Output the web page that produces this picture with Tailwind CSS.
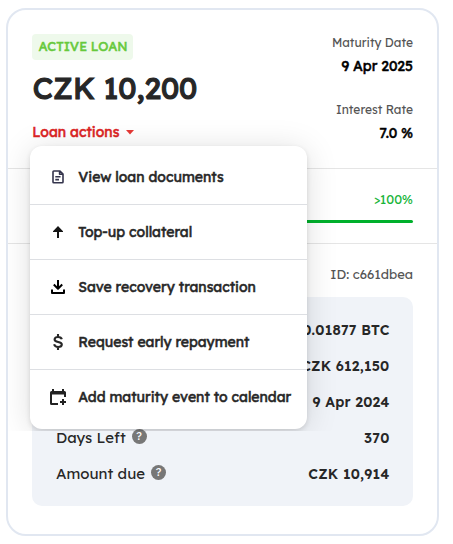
<!DOCTYPE html>
<html lang="en">
<head>
<meta charset="utf-8">
<title>Loan</title>
<script src="https://cdn.jsdelivr.net/npm/@tailwindcss/browser@4"></script>
</head>
<body class="relative h-[544px] w-[453px] overflow-hidden bg-white font-['Lexend','Inter',sans-serif] text-[#272727]">
<main class="ml-[6px] mt-[8px] flex h-[528px] w-[433px] flex-col rounded-[20px] border-2 border-[#e1e7f1] bg-white whitespace-nowrap">
  <header class="flex h-[158px] justify-between px-6 pt-6">
    <div class="flex flex-col items-start">
      <div class="flex h-[26px] w-[101px] items-center rounded bg-[#eef9eb] pl-[6.500px] text-[13px] font-normal text-[#67c93c] [-webkit-text-stroke:0.5px_currentColor]"><span>ACTIVE LOAN</span></div>
      <h1 class="mt-[8px] h-[40px] pl-[0.750px] text-[30px] leading-[40px] font-normal [-webkit-text-stroke:1.2px_currentColor]"><span>CZK 10,200</span></h1>
      <button class="mt-[14px] flex h-[20px] items-center gap-[6.500px] pl-[0.250px] text-[14px] font-normal text-[#dc2323] [-webkit-text-stroke:0.5px_currentColor]"><span>Loan actions</span><svg class="h-[5px] w-[8px]" viewBox="0 0 8 5" fill="#e53935"><path d="M0 0h8L4 4.600z"/></svg></button>
    </div>
    <dl class="flex flex-col items-end">
      <dt class="h-[18px] text-[12px] leading-[18px] text-[#555]"><span>Maturity Date</span></dt>
      <dd class="mt-[4px] h-[20px] text-[14px] leading-[20px] font-normal text-black [-webkit-text-stroke:0.5px_currentColor]"><span>9 Apr 2025</span></dd>
      <dt class="mt-[25px] h-[18px] text-[12px] leading-[18px] text-[#555]"><span>Interest Rate</span></dt>
      <dd class="mt-[4px] h-[20px] text-[14px] leading-[20px] font-normal text-black [-webkit-text-stroke:0.5px_currentColor]"><span>7.0 %</span></dd>
    </dl>
  </header>
  <section class="flex h-[75px] flex-col items-end border-t border-[#e5e5e5] px-6 pt-[20px]">
    <div class="h-[20px] text-[13px] leading-[20px] text-[#19b53b]"><span>&gt;100%</span></div>
    <div class="mt-[11px] h-[3px] w-full rounded-full bg-[#00b02c]"></div>
  </section>
  <section class="flex flex-col border-t border-[#e5e5e5] px-6 pt-[20px]">
    <div class="h-[20px] self-end text-[13px] leading-[20px] text-[#555]"><span>ID: c661dbea</span></div>
    <div class="mt-[13px] h-[209px] rounded-[10px] bg-[#f0f3f8] px-6 pt-[15px] text-[15px]">
      <div class="flex h-[36px] items-center justify-end"><span class="text-[14px] tracking-[0.220px] -mr-[0.500px] font-semibold">0.01877 BTC</span></div>
      <div class="flex h-[36px] items-center justify-end"><span class="text-[14px] tracking-[0.220px] -mr-[0.500px] font-semibold">CZK 612,150</span></div>
      <div class="flex h-[36px] items-center justify-end"><span class="text-[14px] tracking-[0.220px] -mr-[0.500px] font-semibold">9 Apr 2024</span></div>
      <div class="flex h-[36px] items-center justify-between"><span class="flex items-center gap-[6px]"><span>Days Left</span><i class="relative -top-[1.500px] flex size-[15px] items-center justify-center rounded-full bg-[#777] text-[11px] font-normal text-white not-italic">?</i></span><span class="text-[14px] tracking-[0.220px] -mr-[0.500px] font-semibold">370</span></div>
      <div class="flex h-[36px] items-center justify-between"><span class="flex items-center gap-[6px]"><span>Amount due</span><i class="relative -top-[1.500px] flex size-[15px] items-center justify-center rounded-full bg-[#777] text-[11px] font-normal text-white not-italic">?</i></span><span class="text-[14px] tracking-[0.220px] -mr-[0.500px] font-semibold">CZK 10,914</span></div>
    </div>
  </section>
</main>
<div class="absolute top-0 left-[8px] h-[431px] w-[429px] overflow-hidden">
  <nav class="mt-[146px] ml-[22px] flex h-[283px] w-[277px] flex-col rounded-[12px] bg-white py-[4px] text-[14px] font-normal whitespace-nowrap shadow-[0_3px_32px_rgba(0,0,0,0.13),0_2px_5px_rgba(0,0,0,0.12)] [-webkit-text-stroke:0.5px_currentColor]">
    <a class="flex h-[55px] items-center gap-[12.250px] border-b border-[#dddfe3] pl-[20px]"><svg class="size-4" viewBox="0 0 16 16" fill="none" stroke="#34344c" stroke-width="1.600"><path stroke-linejoin="round" d="M3 2.800q0-.8.800-.8H10l3 3v8q0 .800-.800.800H3.800Q3 13.800 3 13zM9.600 2.300v2.900h3M5.300 7.800h5.200M5.300 10.600h3.700"/></svg><span>View loan documents</span></a>
    <a class="flex h-[55px] items-center gap-[12.250px] border-b border-[#dddfe3] pl-[20px]"><svg class="size-4" viewBox="0 0 16 16" fill="#151515"><path d="M8 2 13 7.300v.7H9v6H7V8H3v-.7z"/></svg><span>Top-up collateral</span></a>
    <a class="flex h-[55px] items-center gap-[12.250px] border-b border-[#dddfe3] pl-[20px]"><svg class="size-4" viewBox="0 0 16 16" fill="none" stroke="#000" stroke-width="2"><path d="M8 1v8.500M3.800 5.500 8 9.700l4.200-4.200M2 10.500V14h12v-3.500" stroke-linejoin="round"/></svg><span>Save recovery transaction</span></a>
    <a class="flex h-[55px] items-center gap-[12.250px] border-b border-[#dddfe3] pl-[20px]"><svg class="size-4" viewBox="0 0 16 16" fill="none" stroke="#272727" stroke-width="2.100"><path d="M8 0v3M8 13v3M11.800 5.300C11.400 3.700 10 3 8.100 3 6 3 4.600 4 4.600 5.500c0 3.500 7.200 1.500 7.200 5 0 1.600-1.500 2.500-3.700 2.500-2.100 0-3.500-.9-4-2.700"/></svg><span>Request early repayment</span></a>
    <a class="flex h-[54px] items-center gap-[12.250px] pl-[20px]"><svg class="size-4 overflow-visible" viewBox="0 0 16 16" fill="#222"><path d="M2 0h2v2h8V0h2v2h.5Q16 2 16 3.500V8h-2V5.500H2V14h6v2H1.500Q0 16 0 14.500v-11Q0 2 1.500 2H2zM12 10h2v2h2v2h-2v2h-2v-2h-2v-2h2z"/></svg><span>Add maturity event to calendar</span></a>
  </nav>
</div>
</body>
</html>
